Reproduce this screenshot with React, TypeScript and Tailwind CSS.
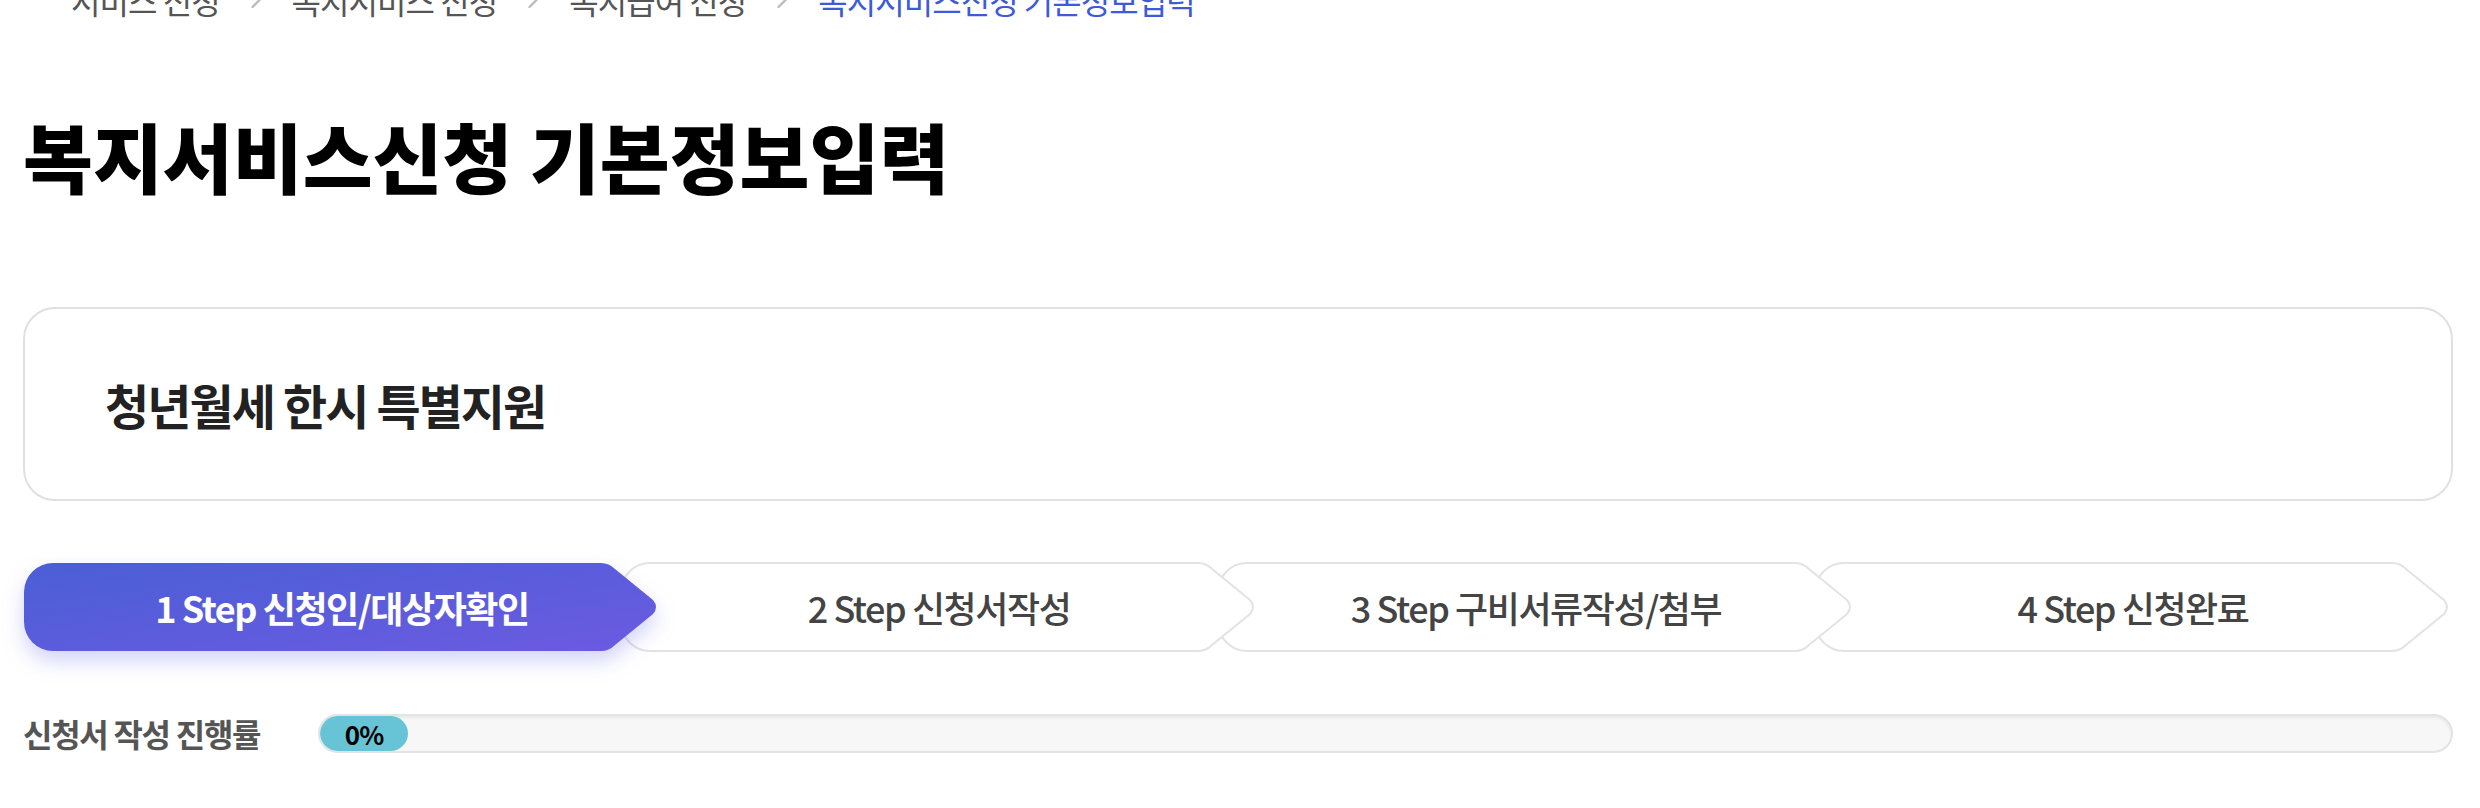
import React from 'react';
import { ChevronRight } from 'lucide-react';

const crumbs = ['서비스 신청', '복지서비스 신청', '복지급여 신청', '복지서비스신청 기본정보입력'];

const steps = [
  { label: '1 Step 신청인/대상자확인', z: 'z-40' },
  { label: '2 Step 신청서작성', z: 'z-30' },
  { label: '3 Step 구비서류작성/첨부', z: 'z-20' },
  { label: '4 Step 신청완료', z: 'z-10' },
];

// chevron-shaped step background (rounded left, pointed right)
const StepShape: React.FC<{ active: boolean }> = ({ active }) => {
  const d =
    'M30 1 H578 Q586 1 592 7 L630 38 Q636 45 630 52 L592 83 Q586 89 578 89 H30 A29 29 0 0 1 1 60 V30 A29 29 0 0 1 30 1 Z';
  return (
    <svg
      viewBox="0 0 638 90"
      className={`absolute inset-0 h-full w-full overflow-visible ${
        active ? 'drop-shadow-[0_10px_10px_rgba(96,100,230,0.28)]' : ''
      }`}
    >
      <defs>
        <linearGradient id="stepGrad" x1="0" y1="0" x2="1" y2="1">
          <stop offset="0%" stopColor="#4a5fd5" />
          <stop offset="100%" stopColor="#6c5ae2" />
        </linearGradient>
      </defs>
      {active ? (
        <path d={d} fill="url(#stepGrad)" />
      ) : (
        <path d={d} fill="#ffffff" stroke="#e3e3e3" strokeWidth="2" />
      )}
    </svg>
  );
};

const App: React.FC = () => {
  return (
    <div className="w-[2480px] h-[808px] overflow-hidden bg-white font-['Noto_Sans_CJK_KR','Noto_Sans',sans-serif]">
      <div className="pl-[23px] pr-[27px]">
        {/* Breadcrumb */}
        <nav className="-mt-[16px] flex h-[32px] items-center gap-[22px] pl-[48px] text-[32px] leading-[32px] tracking-[-0.03em] text-[#555]">
          {crumbs.map((c, i) => (
            <React.Fragment key={c}>
              {i > 0 && <ChevronRight className="h-[28px] w-[28px] text-[#bbb]" strokeWidth={2} />}
              <span className={i === crumbs.length - 1 ? 'text-[#3d5ad8]' : ''}>{c}</span>
            </React.Fragment>
          ))}
        </nav>

        {/* Title */}
        <h1 className="mt-[89px] h-[100px] text-[76px] font-black leading-[100px] tracking-[0em] text-black">
          복지서비스신청 기본정보입력
        </h1>

        {/* Service card */}
        <div className="mt-[102px] flex h-[194px] items-center rounded-[32px] border-2 border-[#e0e0e0] pl-[80px]">
          <h2 className="text-[48px] font-bold tracking-[-0.04em] text-[#222]">청년월세 한시 특별지원</h2>
        </div>

        {/* Steps */}
        <div className="mt-[61px] flex">
          {steps.map((s, i) => (
            <div
              key={s.label}
              className={`relative flex h-[90px] w-[638px] shrink-0 items-center justify-center ${s.z} ${
                i > 0 ? '-ml-[41px]' : ''
              }`}
            >
              <StepShape active={i === 0} />
              <span
                className={`relative text-[36px] tracking-[-0.04em] ${
                  i === 0 ? 'font-bold text-white' : 'font-medium text-[#444]'
                }`}
              >
                {s.label}
              </span>
            </div>
          ))}
        </div>

        {/* Progress */}
        <div className="mt-[62px] flex items-center">
          <span className="w-[295px] shrink-0 text-[32px] font-bold leading-[39px] tracking-[-0.04em] text-[#555]">
            신청서 작성 진행률
          </span>
          <div className="h-[39px] flex-1 overflow-hidden rounded-full border-2 border-[#e3e3e3] bg-[#f7f7f7] shadow-[inset_0_2px_3px_rgba(0,0,0,0.06)]">
            <div className="flex h-full w-[88px] items-center justify-center rounded-full bg-[#67c4d7] text-[26px] font-bold tracking-[-0.04em] text-black">
              0%
            </div>
          </div>
        </div>
      </div>
    </div>
  );
};

export default App;
